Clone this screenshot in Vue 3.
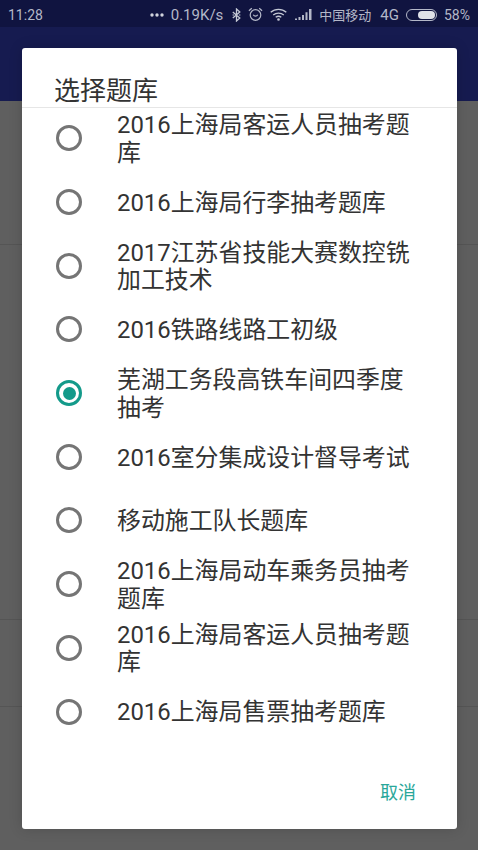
<script setup>
const items = [
  { t: '2016上海局客运人员抽考题库' },
  { t: '2016上海局行李抽考题库' },
  { t: '2017江苏省技能大赛数控铣加工技术' },
  { t: '2016铁路线路工初级' },
  { t: '芜湖工务段高铁车间四季度抽考', on: true },
  { t: '2016室分集成设计督导考试' },
  { t: '移动施工队长题库' },
  { t: '2016上海局动车乘务员抽考题库' },
  { t: '2016上海局客运人员抽考题库' },
  { t: '2016上海局售票抽考题库' }
]
</script>

<template>
  <div class="screen">
    <div class="status">
      <span class="time">11:28</span>
      <div class="status-right">
        <svg class="ic" width="14" height="4" viewBox="0 0 14 4"><circle cx="2" cy="2" r="1.700" fill="#d0d3dc"/><circle cx="7" cy="2" r="1.700" fill="#d0d3dc"/><circle cx="12" cy="2" r="1.700" fill="#d0d3dc"/></svg>
        <span class="speed">0.19K/s</span>
        <svg class="ic" width="9" height="14" viewBox="0 0 9 14"><path d="M.8 4l7 6-3.300 3V1l3.300 3-7 6" fill="none" stroke="#c4c8d4" stroke-width="1.300"/><path d="M.6 7h1.500M6.900 7h1.500" stroke="#c4c8d4" stroke-width="1"/></svg>
        <svg class="ic" width="15" height="15" viewBox="0 0 15 15"><circle cx="7.500" cy="8" r="5.300" fill="none" stroke="#b4b8c8" stroke-width="1.200"/><path d="M5.300 7.800c.8 1.700 3.600 1.700 4.400 0M.9 3.800L3.800 1.200M14.100 3.800L11.200 1.200" fill="none" stroke="#b4b8c8" stroke-width="1.200"/></svg>
        <svg class="ic wifi" width="17" height="13" viewBox="0 0 17 13"><path d="M.7 4.300c4.400-4 11.200-4 15.600 0M3.200 6.900c3-2.500 7.600-2.500 10.600 0M5.700 9.300c1.700-1.300 3.900-1.300 5.600 0" fill="none" stroke="#c4c8d4" stroke-width="1.300"/><circle cx="8.500" cy="11.500" r="1.300" fill="#c4c8d4"/></svg>
        <svg class="ic" width="17" height="11" viewBox="0 0 17 11"><path d="M0 9.500h2V11H0zM3.500 8h2v3h-2zM7 6h2v5H7zM10.500 3.200h2V11h-2zM14 0h2.500v11H14z" fill="#b4b8c8"/></svg>
        <span class="carrier">中国移动</span>
        <span class="net">4G</span>
        <span class="battery"><span class="level"></span></span>
        <span>58%</span>
      </div>
    </div>
    <div class="appbar"></div>
    <div class="page">
      <div class="line l1"></div>
      <div class="line l3"></div>
      <div class="line l4"></div>
    </div>
    <div class="dialog">
      <div class="title">选择题库</div>
      <div class="list">
        <div v-for="(it, i) in items" :key="i" class="row">
          <span class="radio" :class="{ on: it.on }"><span v-if="it.on" class="dot"></span></span>
          <span class="label">{{ it.t }}</span>
        </div>
      </div>
      <div class="actions"><span class="cancel">取消</span></div>
    </div>
  </div>
</template>

<style scoped>
.screen {
  position: relative;
  width: 478px;
  height: 850px;
  overflow: hidden;
  background: #5f5f5f;
  font-family: "Roboto", "Noto Sans CJK SC", sans-serif;
}
.status {
  height: 27px;
  background: #101440;
  color: #b4b8c8;
  font-size: 14px;
  display: flex;
  align-items: center;
  justify-content: space-between;
  padding: 2px 8px 0 8px;
  box-sizing: border-box;
}
.status-right {
  display: flex;
  align-items: center;
  gap: 7px;
}
.speed { font-size: 15px; margin-right: 2px; }
.wifi { margin-right: 1px; }
.carrier { font-size: 13px; margin-right: 2px; }
.net { font-size: 15px; }
.ic { display: block; flex: none; }
.battery {
  width: 31px;
  height: 12px;
  border: 1px solid #b4b8c8;
  border-radius: 6px;
  box-sizing: border-box;
  display: flex;
  justify-content: flex-end;
  padding: 1px;
}
.level { width: 17px; background: #dfe1e8; border-radius: 4px; }
.appbar { height: 74px; background: #161b50; }
.page { position: relative; height: 749px; background: #5f5f5f; }
.line { position: absolute; left: 0; right: 0; height: 1px; background: #555; }
.l1 { top: 143px; }
.l3 { top: 518px; }
.l4 { top: 605px; }
.dialog {
  position: absolute;
  left: 22px;
  top: 48px;
  width: 435px;
  height: 781px;
  background: #fff;
  border-radius: 3px;
  box-shadow: 0 0 14px rgba(0, 0, 0, 0.16);
  display: flex;
  flex-direction: column;
}
.title {
  height: 60px;
  box-sizing: border-box;
  padding: 26px 0 0 32px;
  font-size: 26px;
  line-height: 34px;
  color: #333;
  border-bottom: 1px solid #e6e6e6;
}
.list { display: flex; flex-direction: column; }
.row {
  height: 63.700px;
  display: flex;
  align-items: center;
  flex: none;
}
.radio {
  flex: none;
  width: 26px;
  height: 26px;
  margin: 0 0 3px 34px;
  box-sizing: border-box;
  border: 3px solid #757575;
  border-radius: 50%;
  display: flex;
  align-items: center;
  justify-content: center;
}
.radio.on { border-color: #139a8a; }
.dot { width: 13px; height: 13px; border-radius: 50%; background: #139a8a; }
.label {
  margin-left: 35px;
  width: 300px;
  font-size: 23.900px;
  line-height: 27.500px;
  color: #333;
}
.actions {
  margin-top: auto;
  height: 74px;
  display: flex;
  justify-content: flex-end;
  padding: 25px 41px 0 0;
  box-sizing: border-box;
}
.cancel { color: #29a79a; font-size: 18px; line-height: 26px; }
</style>
